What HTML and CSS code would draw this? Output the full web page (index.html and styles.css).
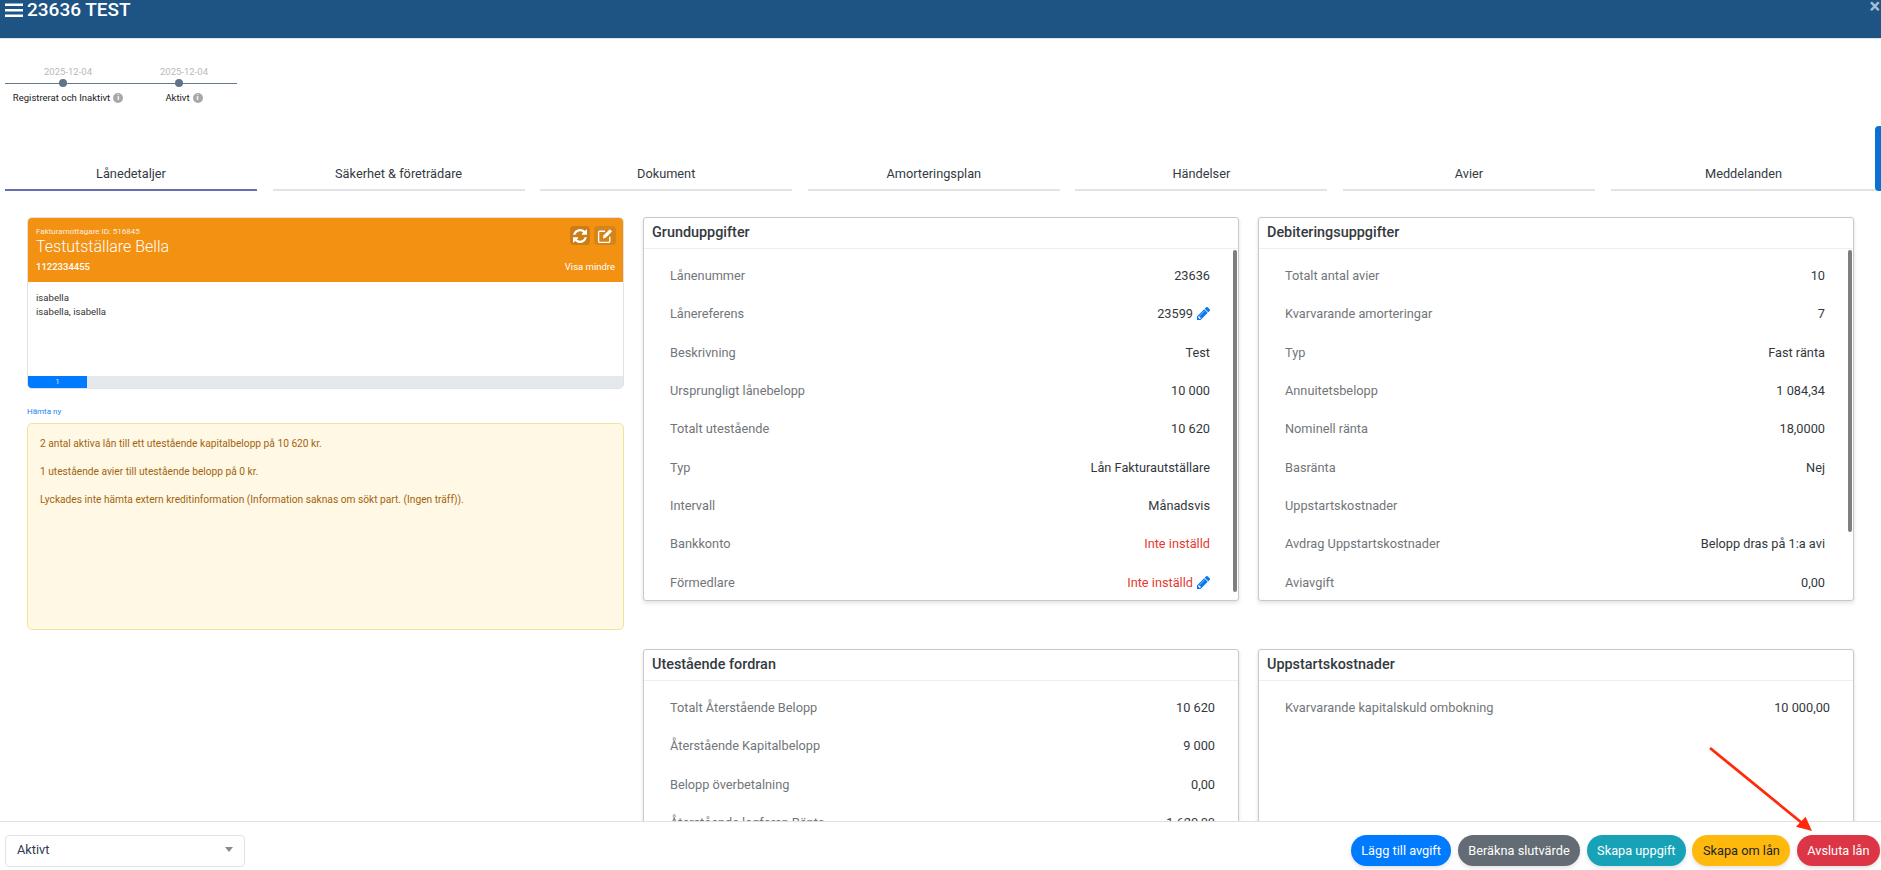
FILE: index.html
```html
<!DOCTYPE html>
<html lang="sv">
<head>
<meta charset="utf-8">
<title>23636 TEST</title>
<link rel="stylesheet" href="styles.css">
</head>
<body>
<div class="page">
  <header class="topbar">
    <h1 class="title">
      <svg class="burger" viewBox="0 0 18 16" aria-hidden="true"><path d="M0 1.500h18v2.600H0zM0 7h18v2.600H0zM0 12.500h18v2.600H0z"/></svg>
      23636 TEST
    </h1>
    <span class="close">×</span>
  </header>

  <section class="timeline">
    <div class="step">
      <span class="step-date">2025-12-04</span>
      <span class="step-dot"></span>
      <span class="step-label">Registrerat och Inaktivt <i class="info">i</i></span>
    </div>
    <div class="step">
      <span class="step-date">2025-12-04</span>
      <span class="step-dot"></span>
      <span class="step-label">Aktivt <i class="info">i</i></span>
    </div>
  </section>

  <nav class="tabs">
    <a class="tab active">Lånedetaljer</a>
    <a class="tab">Säkerhet &amp; företrädare</a>
    <a class="tab">Dokument</a>
    <a class="tab">Amorteringsplan</a>
    <a class="tab">Händelser</a>
    <a class="tab">Avier</a>
    <a class="tab">Meddelanden</a>
  </nav>
  <span class="side-handle"></span>

  <main class="content">
    <aside class="left">
      <div class="party">
        <div class="party-head">
          <div class="party-actions">
            <span class="party-btn">
              <svg viewBox="0 0 1536 1536" aria-hidden="true"><path fill="#fff" d="M1511 928q0 5-1 7-64 268-268 434.500T764 1536q-146 0-282.500-55T238 1324l-129 129q-19 19-45 19t-45-19-19-45V960q0-26 19-45t45-19h448q26 0 45 19t19 45-19 45L420 1142q71 66 161 102t187 36q134 0 250-65t186-179q11-17 53-117 8-23 30-23h192q13 0 22.500 9.500T1511 928zm25-800v448q0 26-19 45t-45 19h-448q-26 0-45-19t-19-45 19-45l138-138Q969 256 768 256q-134 0-250 65T332 500q-11 17-53 117-8 23-30 23H50q-13 0-22.500-9.500T18 608v-7q65-268 270-434.500T768 0q146 0 284 55.500T1297 212l130-129q19-19 45-19t45 19 19 45z"/></svg>
            </span>
            <span class="party-btn wide">
              <svg viewBox="0 0 20 20" aria-hidden="true"><path fill="none" stroke="#fff" stroke-width="1.700" d="M16 11v5.500a1.500 1.500 0 0 1-1.500 1.500h-11A1.500 1.500 0 0 1 2 16.500v-11A1.500 1.500 0 0 1 3.500 4H10"/><path fill="#fff" d="M8 9.500L16 1.500l2.800 2.800-8 8L7.500 13z"/></svg>
            </span>
          </div>
          <div class="party-id">Fakturamottagare ID: 516845</div>
          <div class="party-name">Testutställare Bella</div>
          <div class="party-foot">
            <strong>1122334455</strong>
            <span>Visa mindre</span>
          </div>
        </div>
        <div class="party-body">
          <div>isabella</div>
          <div>isabella, isabella</div>
        </div>
        <div class="pager"><span class="page-current">1</span></div>
      </div>
      <a class="fetch">Hämta ny</a>
      <div class="notice">
        <p>2 antal aktiva lån till ett utestående kapitalbelopp på 10 620 kr.</p>
        <p>1 utestående avier till utestående belopp på 0 kr.</p>
        <p>Lyckades inte hämta extern kreditinformation (Information saknas om sökt part. (Ingen träff)).</p>
      </div>
    </aside>

    <div class="cards">
      <section class="card">
        <h2 class="card-title">Grunduppgifter</h2>
        <div class="card-body">
          <dl class="rows">
            <div class="row"><dt>Lånenummer</dt><dd>23636</dd></div>
            <div class="row"><dt>Lånereferens</dt><dd>23599 <svg class="pencil" viewBox="0 0 1515 1515" aria-hidden="true"><path d="M363 1387l91-91-235-235-91 91v107h128v128h107zm523-928q0-22-22-22-10 0-17 7L305 986q-7 7-7 17 0 22 22 22 10 0 17-7l542-542q7-7 7-17zm-54-192l416 416-832 832H0v-416zm683 96q0 53-37 90l-166 166-416-416 166-165q36-38 90-38 53 0 91 38l235 234q37 39 37 91z"/></svg></dd></div>
            <div class="row"><dt>Beskrivning</dt><dd>Test</dd></div>
            <div class="row"><dt>Ursprungligt lånebelopp</dt><dd>10 000</dd></div>
            <div class="row"><dt>Totalt utestående</dt><dd>10 620</dd></div>
            <div class="row"><dt>Typ</dt><dd>Lån Fakturautställare</dd></div>
            <div class="row"><dt>Intervall</dt><dd>Månadsvis</dd></div>
            <div class="row"><dt>Bankkonto</dt><dd class="unset">Inte inställd</dd></div>
            <div class="row"><dt>Förmedlare</dt><dd class="unset">Inte inställd <svg class="pencil" viewBox="0 0 1515 1515" aria-hidden="true"><path d="M363 1387l91-91-235-235-91 91v107h128v128h107zm523-928q0-22-22-22-10 0-17 7L305 986q-7 7-7 17 0 22 22 22 10 0 17-7l542-542q7-7 7-17zm-54-192l416 416-832 832H0v-416zm683 96q0 53-37 90l-166 166-416-416 166-165q36-38 90-38 53 0 91 38l235 234q37 39 37 91z"/></svg></dd></div>
          </dl>
          <span class="scrollbar bar-long"></span>
        </div>
      </section>

      <section class="card">
        <h2 class="card-title">Debiteringsuppgifter</h2>
        <div class="card-body">
          <dl class="rows">
            <div class="row"><dt>Totalt antal avier</dt><dd>10</dd></div>
            <div class="row"><dt>Kvarvarande amorteringar</dt><dd>7</dd></div>
            <div class="row"><dt>Typ</dt><dd>Fast ränta</dd></div>
            <div class="row"><dt>Annuitetsbelopp</dt><dd>1 084,34</dd></div>
            <div class="row"><dt>Nominell ränta</dt><dd>18,0000</dd></div>
            <div class="row"><dt>Basränta</dt><dd>Nej</dd></div>
            <div class="row"><dt>Uppstartskostnader</dt><dd></dd></div>
            <div class="row"><dt>Avdrag Uppstartskostnader</dt><dd>Belopp dras på 1:a avi</dd></div>
            <div class="row"><dt>Aviavgift</dt><dd>0,00</dd></div>
          </dl>
          <span class="scrollbar bar-short"></span>
        </div>
      </section>

      <section class="card">
        <h2 class="card-title">Utestående fordran</h2>
        <div class="card-body no-scroll">
          <dl class="rows">
            <div class="row"><dt>Totalt Återstående Belopp</dt><dd>10 620</dd></div>
            <div class="row"><dt>Återstående Kapitalbelopp</dt><dd>9 000</dd></div>
            <div class="row"><dt>Belopp överbetalning</dt><dd>0,00</dd></div>
            <div class="row"><dt>Återstående lagfaren Ränta</dt><dd>1 620,00</dd></div>
          </dl>
        </div>
      </section>

      <section class="card">
        <h2 class="card-title">Uppstartskostnader</h2>
        <div class="card-body no-scroll">
          <dl class="rows">
            <div class="row"><dt>Kvarvarande kapitalskuld ombokning</dt><dd>10 000,00</dd></div>
          </dl>
        </div>
      </section>
    </div>
  </main>

  <footer class="footer">
    <div class="select"><span>Aktivt</span><i class="caret"></i></div>
    <div class="actions">
      <button class="btn blue">Lägg till avgift</button>
      <button class="btn grey">Beräkna slutvärde</button>
      <button class="btn teal">Skapa uppgift</button>
      <button class="btn amber">Skapa om lån</button>
      <button class="btn red">Avsluta lån</button>
    </div>
  </footer>

  <svg class="arrow" viewBox="0 0 120 100" aria-hidden="true">
    <path d="M1 2L93 77" fill="none" stroke="#ff2a0a" stroke-width="2.800"/>
    <path d="M103 85L87 80.700L96.600 70.700z" fill="#ff2a0a"/>
  </svg>
</div>
</body>
</html>
```
FILE: styles.css
```css
* { box-sizing: border-box; }
html, body { margin: 0; padding: 0; height: 100%; overflow: hidden; background: #fff; }
body { font-family: Roboto, "Liberation Sans", sans-serif; color: #212529; font-size: 12.750px; }
.page { position: relative; width: 1881px; height: 870px; overflow: hidden; }

.topbar { height: 39px; background: #1d5483; border-bottom: 1px solid #dfe3e8; display: flex; justify-content: space-between; align-items: flex-start; color: #fff; }
.title { margin: 0; padding-left: 5px; font-size: 19px; font-weight: 500; line-height: 19px; display: flex; align-items: center; gap: 4px; }
.burger { width: 18px; height: 16px; fill: #fff; }
.close { font-size: 20px; font-weight: 700; line-height: 10px; color: #a7c0d8; padding: 1px 1px 0 0; }

.timeline { width: 232px; margin: 33px 0 0 5px; height: 40px; padding-left: 5px; display: flex; background: linear-gradient(#66788a, #66788a) 0 11px / 100% 1px no-repeat; }
.step { width: 116px; flex: none; display: flex; flex-direction: column; align-items: center; }
.step-date { font-size: 9.500px; line-height: 10px; color: #b9b9b9; height: 12px; margin-top: -5px; }
.step-dot { width: 8px; height: 8px; flex: none; border-radius: 50%; background: #5f7389; margin-right: 10px; }
.step-label { font-size: 9.500px; line-height: 12px; margin-top: 5px; color: #222; white-space: nowrap; display: flex; align-items: center; gap: 3px; }
.info { width: 10px; height: 10px; border-radius: 50%; background: #a8a8a8; color: #fff; font-size: 7.500px; line-height: 10px; text-align: center; font-style: normal; font-weight: 700; }

.tabs { display: grid; grid-template-columns: repeat(6, 252px) 266px; column-gap: 15.600px; margin: 51px 0 0 5px; }
.tab { display: block; height: 28px; font-size: 12.750px; line-height: 22px; text-align: center; color: #333a44; border-bottom: 2px solid #e2e3e5; }
.tab.active { border-bottom-color: #656fae; }
.side-handle { position: absolute; right: 0; top: 126px; width: 6px; height: 65px; background: #0b6fd3; border-radius: 4px 0 0 4px; }

.content { display: flex; padding: 26px 0 0 27px; }
.left { width: 597px; flex: none; }
.party { border: 1px solid #e0e2e5; border-radius: 5px; overflow: hidden; }
.party-head { position: relative; height: 64px; background: #f39113; color: #fff; padding: 9px 8px 0; }
.party-actions { position: absolute; right: 7px; top: 8px; display: flex; gap: 4px; }
.party-btn { width: 20px; height: 19px; border-radius: 4px; background: #cc7d16; display: flex; align-items: center; justify-content: center; }
.party-btn.wide { width: 22px; background: #d5841a; }
.party-btn svg { width: 14px; height: 14px; }
.party-btn.wide svg { width: 16px; height: 16px; }
.party-id { font-size: 8px; line-height: 9px; opacity: .85; }
.party-name { font-size: 16px; font-weight: 300; line-height: 20px; margin-top: 1px; }
.party-foot { display: flex; justify-content: space-between; font-size: 9.500px; line-height: 12px; margin-top: 4px; }
.party-foot strong { font-weight: 500; }
.party-body { height: 94px; font-size: 9.600px; line-height: 13.500px; padding: 9px 8px; color: #333; }
.pager { height: 12px; background: #e5e8ec; display: flex; }
.page-current { width: 59px; background: #007bff; color: #cfe3ff; font-size: 8px; line-height: 12px; text-align: center; }
.fetch { display: block; font-size: 8px; line-height: 10px; color: #1a86f0; margin-top: 18px; height: 16px; }
.notice { height: 207px; background: #fff8e5; border: 1px solid #ece59a; border-radius: 5px; padding: 13px 12px; color: #a2640f; font-size: 10.200px; line-height: 14px; }
.notice p { margin: 0 0 14px; }

.cards { width: 1211px; margin-left: 19px; display: grid; grid-template-columns: 596px 596px; column-gap: 19px; row-gap: 48px; align-content: start; }
.card { background: #fff; border: 1px solid #c9c9c9; border-radius: 3px; box-shadow: 0 2px 4px rgba(0,0,0,.12); overflow: hidden; height: 384px; }
.card-title { margin: 0; height: 31px; font-size: 14.400px; line-height: 29px; font-weight: 500; padding-left: 8px; border-bottom: 1px solid #eeeff1; color: #343a40; }
.card-body { position: relative; padding: 7.500px 28px 0 26px; }
.card-body.no-scroll { padding-right: 23px; }
.rows { margin: 0; }
.row { display: flex; justify-content: space-between; align-items: center; height: 38.300px; font-size: 12.750px; }
dt { color: #72757a; font-weight: 400; }
dd { margin: 0; color: #33383d; display: flex; align-items: center; gap: 4px; white-space: nowrap; }
dd.unset { color: #e53a32; }
.pencil { width: 13px; height: 13px; fill: #0a78f0; }
.scrollbar { position: absolute; right: 1px; top: 1px; width: 4px; background: #7f7f7f; border-radius: 2px; }
.bar-long { height: 342px; }
.bar-short { height: 282px; }

.footer { position: absolute; left: 0; right: 0; bottom: 0; height: 49px; background: #fff; border-top: 1px solid #e0e0e0; display: flex; justify-content: space-between; padding: 13px 1px 0 5px; }
.select { width: 240px; height: 32px; border: 1px solid #e0e2e6; border-radius: 4px; display: flex; justify-content: space-between; align-items: center; padding: 0 11px 3px; font-size: 12.750px; color: #2d3a4f; }
.caret { width: 0; height: 0; border-left: 4px solid transparent; border-right: 4px solid transparent; border-top: 5px solid #8b8b8b; }
.actions { display: flex; gap: 6.400px; }
.btn { height: 31px; border: 0; border-radius: 16px; font: 400 12.750px Roboto, sans-serif; color: #fff; padding: 0 10.500px; box-shadow: 0 2px 4px rgba(0,0,0,.12); white-space: nowrap; }
.blue { background: #007bff; }
.grey { background: #636b74; }
.teal { background: #17a2b8; }
.amber { background: #ffb80c; color: #212529; }
.red { background: #dc3545; }
.arrow { position: absolute; left: 1709px; top: 746px; width: 120px; height: 100px; overflow: visible; }
```
